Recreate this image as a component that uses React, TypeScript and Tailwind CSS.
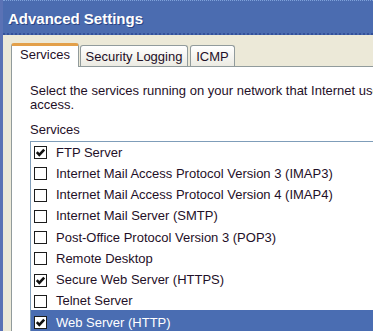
const services = [
  { name: "FTP Server", checked: true },
  { name: "Internet Mail Access Protocol Version 3 (IMAP3)", checked: false },
  { name: "Internet Mail Access Protocol Version 4 (IMAP4)", checked: false },
  { name: "Internet Mail Server (SMTP)", checked: false },
  { name: "Post-Office Protocol Version 3 (POP3)", checked: false },
  { name: "Remote Desktop", checked: false },
  { name: "Secure Web Server (HTTPS)", checked: true },
  { name: "Telnet Server", checked: false },
  { name: "Web Server (HTTP)", checked: true, selected: true },
];

function CheckBox({ checked }: { checked: boolean }) {
  return (
    <div className="w-[13px] h-[13px] shrink-0 border border-[#1c1c1c] bg-white flex items-center justify-center">
      {checked && (
        <svg width="11" height="11" viewBox="0 0 11 11">
          <path d="M1.8 5.2 L4.3 7.8 L9.2 2.6" fill="none" stroke="#111" strokeWidth="2.6" />
        </svg>
      )}
    </div>
  );
}

export default function App() {
  return (
    <div className="w-[373px] h-[331px] overflow-hidden bg-[#ece9d8] flex flex-col border-l-[3px] border-[#5a72b5] font-['Liberation_Sans',Arial,sans-serif] text-[13px] leading-[14px] text-[#1f1028]">
      {/* title bar */}
      <div className="h-[35px] shrink-0 bg-[#4b6cb0] border-t border-[#7fa2da] border-b-2 border-b-[#34519a] border-dotted pl-[5px] pt-[9px]">
        <div className="text-white font-bold text-[15px] leading-[17px] [text-shadow:1px_1px_0_#2c4585]">
          Advanced Settings
        </div>
      </div>

      <div className="flex-1 flex flex-col pl-[8px] pt-[8px]">
        {/* tabs */}
        <div className="flex items-end h-[23px] gap-px">
          <div className="relative z-10 -mb-px h-[24px] w-[68px] bg-white border-x border-[#919b9c] border-t-[3px] border-t-[#e3a04a] rounded-t-[3px] text-center pt-[2px]">
            Services
          </div>
          <div className="h-[21px] w-[108px] bg-gradient-to-b from-white to-[#ecebe3] border-x border-t border-[#919b9c] rounded-t-[3px] text-center pt-[4px]">
            Security Logging
          </div>
          <div className="ml-px h-[21px] w-[45px] bg-gradient-to-b from-white to-[#ecebe3] border-x border-t border-[#919b9c] rounded-t-[3px] text-center pt-[4px]">
            ICMP
          </div>
        </div>

        {/* panel */}
        <div className="flex-1 bg-white border-t border-l border-[#919b9c] pl-[18px] pt-[17px] flex flex-col">
          <p className="whitespace-nowrap">
            Select the services running on your network that Internet users can
            <br />
            access.
          </p>
          <div className="mt-[11px]">Services</div>
          <div className="mt-[4px] flex-1 border-t border-l border-[#7f9db9] flex flex-col">
            {services.map((s) => (
              <div
                key={s.name}
                className={
                  "h-[21.25px] shrink-0 flex items-center gap-[9px] pl-[3px] whitespace-nowrap " +
                  (s.selected ? "bg-[#4a6db2] text-white -mt-[2px] h-[23.25px] pt-[2px]" : "")
                }
              >
                <CheckBox checked={s.checked} />
                <span>{s.name}</span>
              </div>
            ))}
          </div>
        </div>
      </div>
    </div>
  );
}
